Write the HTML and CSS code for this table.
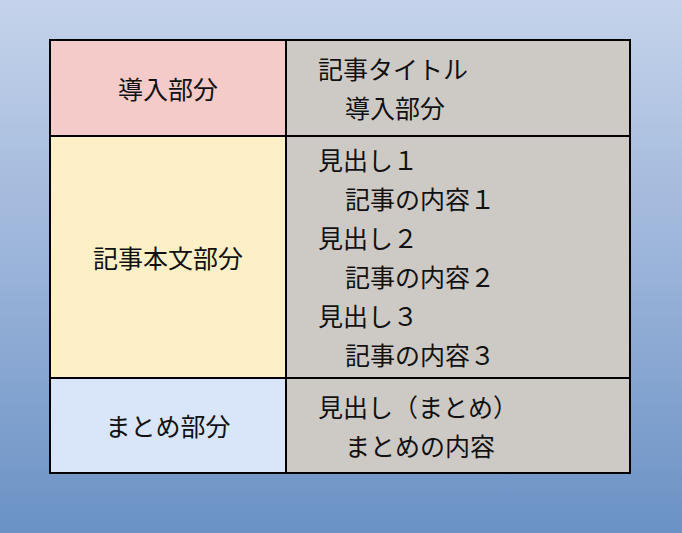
FILE: index.html
```html
<!DOCTYPE html>
<html lang="ja">
<head>
<meta charset="utf-8">
<link rel="stylesheet" href="styles.css">
</head>
<body>
<div class="page">
  <div class="table">
    <div class="cell label intro">導入部分</div>
    <div class="cell content">
      <div class="line">記事タイトル</div>
      <div class="line sub">導入部分</div>
    </div>
    <div class="cell label body">記事本文部分</div>
    <div class="cell content">
      <div class="line">見出し１</div>
      <div class="line sub">記事の内容１</div>
      <div class="line">見出し２</div>
      <div class="line sub">記事の内容２</div>
      <div class="line">見出し３</div>
      <div class="line sub">記事の内容３</div>
    </div>
    <div class="cell label summary">まとめ部分</div>
    <div class="cell content">
      <div class="line">見出し（まとめ）</div>
      <div class="line sub">まとめの内容</div>
    </div>
  </div>
</div>
</body>
</html>
```
FILE: styles.css
```css
html, body {
  margin: 0;
  padding: 0;
}
body {
  width: 682px;
  height: 533px;
  background: linear-gradient(to bottom, #c4d3ea 0%, #9ab3d9 50%, #6a92c5 100%);
  font-family: "Noto Sans CJK JP", "Noto Sans", sans-serif;
  color: #111;
}
.page {
  padding: 39px 0 0 49px;
}
.table {
  display: grid;
  grid-template-columns: 234px 342px;
  grid-template-rows: 94px 240px 93px;
  gap: 2px;
  padding: 2px;
  width: 578px;
  background: #000;
}
.cell {
  display: flex;
  flex-direction: column;
  justify-content: center;
  font-size: 25px;
  line-height: 39px;
}
.label {
  align-items: center;
}
.intro { background: #f4cbc8; }
.body { background: #fdf0c7; }
.summary { background: #d9e5f9; }
.content {
  background: #cdcac6;
  padding-left: 31px;
}
.line.sub {
  padding-left: 27px;
}
```
